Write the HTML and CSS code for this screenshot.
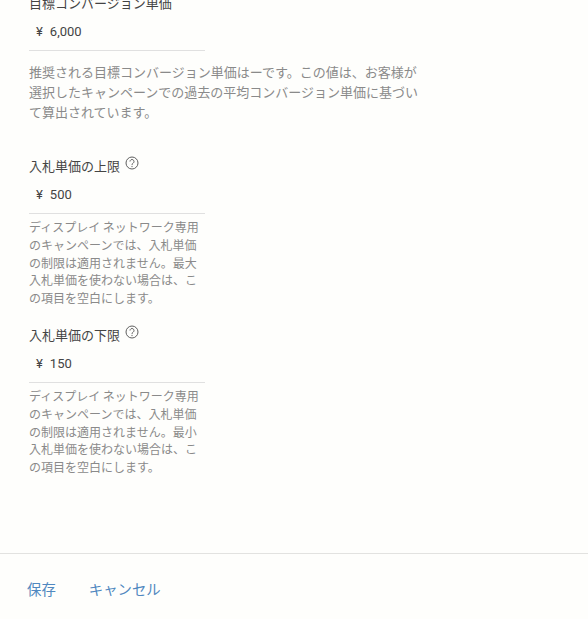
FILE: index.html
```html
<!DOCTYPE html>
<html lang="ja">
<head>
    <meta charset="UTF-8">
    <meta name="viewport" content="width=device-width, initial-scale=1.0">
    <title>入札単価の設定</title>
    <link rel="stylesheet" href="styles.css">
</head>
<body>
    <div class="form-body">
        <div class="field field-target">
            <div class="field-label">目標コンバージョン単価</div>
            <div class="field-input"><span class="yen">¥</span>6,000</div>
            <p class="help-wide">推奨される目標コンバージョン単価はーです。この値は、お客様が選択したキャンペーンでの過去の平均コンバージョン単価に基づいて算出されています。</p>
        </div>

        <div class="field field-max">
            <div class="field-label">入札単価の上限
                <svg class="help-icon" viewBox="0 0 14 14"><circle cx="7" cy="7" r="6"/><path d="M5 5.5a2 2 0 1 1 3.2 1.6c-.8.5-1.2.9-1.2 1.8"/><path d="M7 9.9v1.2"/></svg>
            </div>
            <div class="field-input"><span class="yen">¥</span>500</div>
            <p class="help-small">ディスプレイ ネットワーク専用のキャンペーンでは、入札単価の制限は適用されません。最大入札単価を使わない場合は、この項目を空白にします。</p>
        </div>

        <div class="field field-min">
            <div class="field-label">入札単価の下限
                <svg class="help-icon" viewBox="0 0 14 14"><circle cx="7" cy="7" r="6"/><path d="M5 5.5a2 2 0 1 1 3.2 1.6c-.8.5-1.2.9-1.2 1.8"/><path d="M7 9.9v1.2"/></svg>
            </div>
            <div class="field-input"><span class="yen">¥</span>150</div>
            <p class="help-small">ディスプレイ ネットワーク専用のキャンペーンでは、入札単価の制限は適用されません。最小入札単価を使わない場合は、この項目を空白にします。</p>
        </div>
    </div>

    <div class="form-actions">
        <a class="action" href="#">保存</a>
        <a class="action" href="#">キャンセル</a>
    </div>
</body>
</html>
```

FILE: styles.css
```css
html, body {
    height: 100%;
}

body {
    margin: 0;
    display: flex;
    flex-direction: column;
    overflow: hidden;
    background: #fefefc;
    color: #444;
    font-family: "Noto Sans CJK JP", "Noto Sans", sans-serif;
    font-size: 13px;
}

.form-body {
    height: 560px;
    margin-top: -7px;
    padding-left: 29px;
}

.field-label {
    display: flex;
    align-items: flex-start;
    gap: 4.5px;
    height: 20px;
    line-height: 20px;
}

.help-icon {
    width: 14px;
    height: 14px;
    fill: none;
    stroke: #5f5f5f;
    stroke-width: 1;
}

.field-input {
    width: 176px;
    box-sizing: border-box;
    height: 36px;
    margin-top: 2px;
    padding: 7px 0 0 7px;
    line-height: 20px;
    border-bottom: 1px solid #e0e0e0;
    font-family: Roboto, "Noto Sans CJK JP", sans-serif;
    font-size: 13px;
}

.yen {
    margin-right: 7px;
}

.help-wide {
    width: 392px;
    margin: 11px 0 0;
    line-height: 20px;
    color: #8a8a8a;
}

.help-small {
    width: 176px;
    margin: 4px 0 0;
    line-height: 17.8px;
    font-size: 12px;
    color: #8a8a8a;
}

.field-max {
    margin-top: 34px;
}

.field-min {
    margin-top: 18px;
}

.form-actions {
    flex: 1;
    display: flex;
    gap: 33px;
    padding: 25px 0 0 27px;
    border-top: 1px solid #e2e2e0;
}

.action {
    font-size: 14.4px;
    line-height: 20px;
    color: #5088c0;
    text-decoration: none;
}
```
